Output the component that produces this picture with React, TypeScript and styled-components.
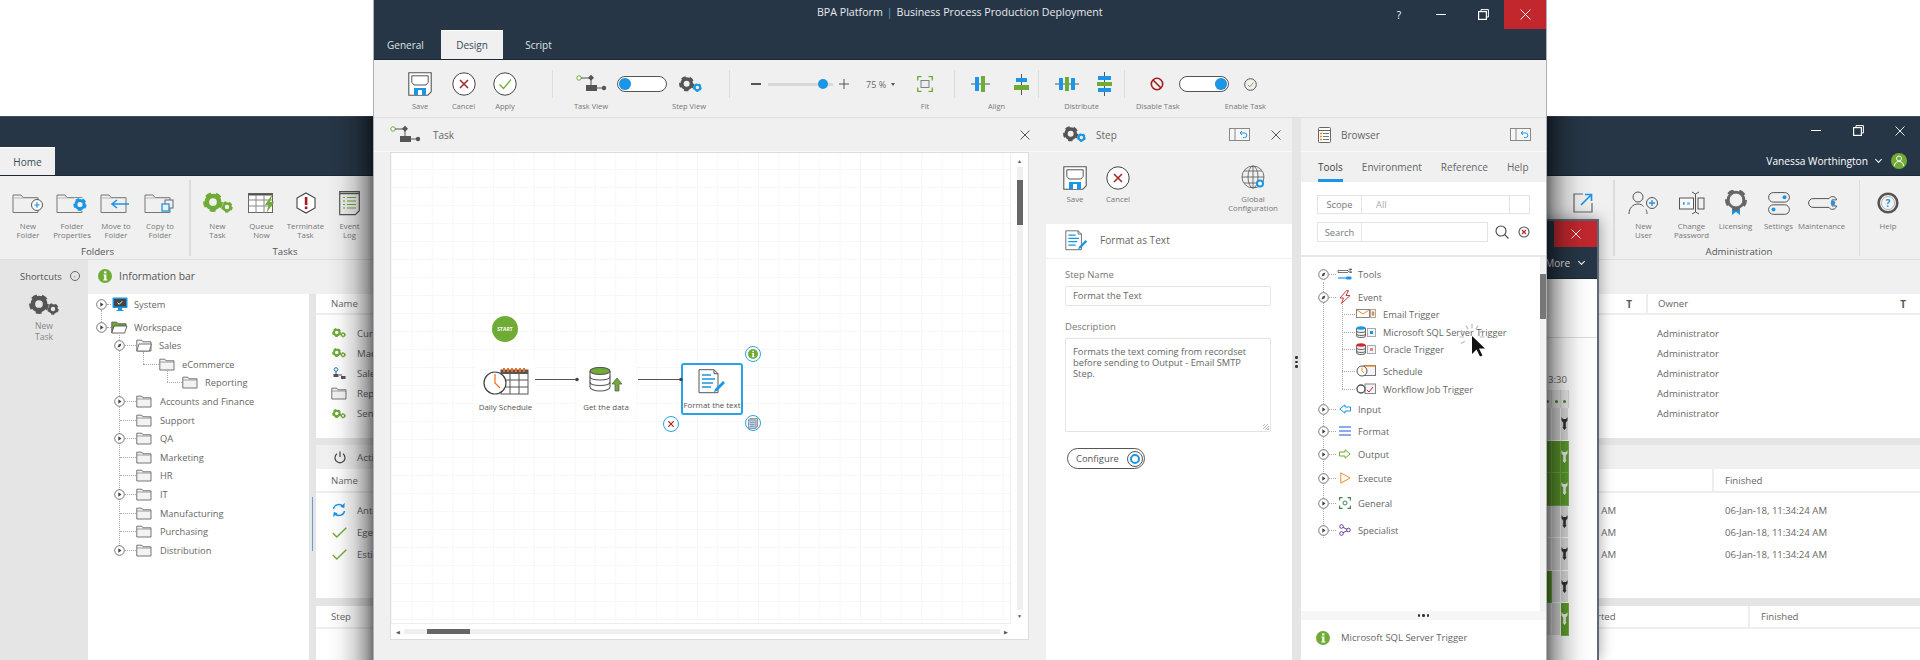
import React from "react";
import styled, { createGlobalStyle } from "styled-components";

const Shell = createGlobalStyle`
  html, body { margin: 0; padding: 0; background: #fff; overflow: hidden; }
  * { box-sizing: border-box; }
  body { font-family: "Open Sans", "Liberation Sans", sans-serif; color: #666; }
`;

const DARK = "#263646";
const BLUE = "#1b95e6";
const GREEN = "#6fab35";
const RED = "#c1272d";

/* ---------- drawings ---------- */

const Gear = ({ x, y, r, c }: { x: number; y: number; r: number; c: string }) => (
  <g fill="none" stroke={c}>
    <circle cx={x} cy={y} r={r * 0.68} strokeWidth={r * 0.5} />
    <circle cx={x} cy={y} r={r * 0.93} strokeWidth={r * 0.34} strokeDasharray={`${r * 0.62} ${r * 0.55}`} />
  </g>
);

const Gears = ({ c = "#555", c2, w = 30, h = 22 }: { c?: string; c2?: string; w?: number; h?: number }) => (
  <svg width={w} height={h} viewBox="0 0 30 22">
    <Gear x={10} y={10} r={9} c={c} />
    <Gear x={24} y={15} r={5.2} c={c2 || c} />
  </svg>
);

const FolderBase = ({ children }: { children?: React.ReactNode }) => (
  <svg width="32" height="21" viewBox="0 0 32 21">
    <path d="M1 19.5V2h8l2 2.5h15v15z" fill="none" stroke="#777" strokeWidth="1" />
    <path d="M1 5h25" stroke="#aaa" strokeWidth=".8" />
    {children}
  </svg>
);

const SmallFolder = ({ open }: { open?: boolean }) => (
  <svg width="16" height="13" viewBox="0 0 16 13">
    <path d="M.8 12V1.2h5l1.2 1.6h8V12z" fill="#f3f3f3" stroke="#666" strokeWidth=".9" />
    {open ? <path d="M.8 12l2.2-7h12.4l-2 7z" fill="#fff" stroke="#666" strokeWidth=".9" /> : <path d="M.8 4h14.2" stroke="#888" strokeWidth=".8" />}
  </svg>
);

const GreenFolder = () => (
  <svg width="17" height="13" viewBox="0 0 17 13">
    <path d="M.8 12V1.2h5l1.2 1.6h8v2" fill={GREEN} stroke="#555" strokeWidth=".9" />
    <path d="M.8 12l2.2-7h13l-2.4 7z" fill="#fff" stroke="#555" strokeWidth=".9" />
  </svg>
);

const Monitor = () => (
  <svg width="16" height="15" viewBox="0 0 16 15">
    <rect x=".5" y=".5" width="15" height="10.5" rx="1" fill={BLUE} />
    <rect x="2" y="2" width="12" height="7.5" fill="#444" />
    <path d="M5.5 5.7l1.7 1.6 3-3" stroke="#fff" strokeWidth="1" fill="none" />
    <path d="M6.5 11h3v2h-3zM4.5 13.5h7" fill={BLUE} stroke={BLUE} />
  </svg>
);

const Save = ({ s = 24 }: { s?: number }) => (
  <svg width={s} height={s} viewBox="0 0 24 24">
    <path d="M.8.8h22.4v19l-3.4 3.4H.8z" fill="#fff" stroke="#555" strokeWidth="1.1" />
    <path d="M3.8 3.8h16.4v6.6l-2.3 2.6H6.1l-2.3-2.6z" fill="none" stroke="#555" />
    <rect x="6" y="16" width="12" height="7" fill={BLUE} />
    <rect x="10" y="18" width="4" height="5" fill="#fff" />
  </svg>
);

const CancelIcon = ({ s = 24 }: { s?: number }) => (
  <svg width={s} height={s} viewBox="0 0 24 24">
    <circle cx="12" cy="12" r="11.2" fill="#fff" stroke="#444" strokeWidth="1" />
    <path d="M8 8l8 8M16 8l-8 8" stroke="#a32222" strokeWidth="1.5" />
  </svg>
);

const ApplyIcon = () => (
  <svg width="24" height="24" viewBox="0 0 24 24">
    <circle cx="12" cy="12" r="11.2" fill="#fff" stroke="#444" strokeWidth="1" />
    <path d="M6.5 12.5l4 4 7.5-9" stroke={GREEN} strokeWidth="1.2" fill="none" />
  </svg>
);

const TaskFlow = () => (
  <svg width="31" height="20" viewBox="0 0 31 20">
    <circle cx="3" cy="4" r="2.2" fill="#fff" stroke={GREEN} />
    <path d="M5 4h10M15 4v9M21 14h6" stroke="#555" strokeWidth="1" fill="none" />
    <path d="M15 .8l3 3-3 3-3-3z" fill="#555" />
    <rect x="10" y="11" width="11" height="6" fill="#555" />
    <circle cx="28" cy="14" r="2.2" fill="#555" />
  </svg>
);

const BlueGears = () => <Gears c="#555" c2={BLUE} w={23} h={17} />;

const FitIcon = () => (
  <svg width="16" height="16" viewBox="0 0 16 16" fill="none">
    <path d="M.7 4.5V.7h3.8M11.5.7h3.8v3.8M15.3 11.5v3.8h-3.8M4.5 15.3H.7v-3.8" stroke={GREEN} strokeWidth="1.3" />
    <rect x="4" y="4.5" width="8" height="7" stroke="#777" fill="#eee" strokeWidth=".9" />
  </svg>
);

const AlignV = () => (
  <svg width="19" height="16" viewBox="0 0 19 16">
    <path d="M0 8h19" stroke="#555" />
    <rect x="4" y="1" width="4" height="14" fill={BLUE} />
    <rect x="10" y="0" width="4" height="16" fill={GREEN} />
  </svg>
);

const AlignH = () => (
  <svg width="15" height="21" viewBox="0 0 15 21">
    <path d="M7.5 0v21" stroke="#555" />
    <rect x="2" y="4" width="11" height="4" fill={BLUE} />
    <rect x="0" y="11" width="15" height="5" fill={GREEN} />
  </svg>
);

const DistV = () => (
  <svg width="24" height="14" viewBox="0 0 24 14">
    <path d="M0 7h24" stroke="#555" />
    <rect x="4" y="1" width="4" height="12" fill={BLUE} />
    <rect x="10" y="0" width="4" height="14" fill={GREEN} />
    <rect x="16" y="1" width="4" height="12" fill={BLUE} />
  </svg>
);

const DistH = () => (
  <svg width="15" height="24" viewBox="0 0 15 24">
    <path d="M7.5 0v24" stroke="#555" />
    <rect x="1" y="4" width="13" height="4" fill={BLUE} />
    <rect x="0" y="10" width="15" height="4" fill={GREEN} />
    <rect x="1" y="16" width="13" height="4" fill={BLUE} />
  </svg>
);

const NoEntry = () => (
  <svg width="14" height="14" viewBox="0 0 14 14" fill="none">
    <circle cx="7" cy="7" r="5.7" stroke="#a01d22" strokeWidth="1.6" />
    <path d="M3 3l8 8" stroke="#a01d22" strokeWidth="1.6" />
  </svg>
);

const SmallCheck = () => (
  <svg width="13" height="13" viewBox="0 0 13 13" fill="none">
    <circle cx="6.5" cy="6.5" r="5.8" stroke="#555" />
    <path d="M3.8 6.8l2 2 3.6-4" stroke={GREEN} />
  </svg>
);

const Undock = () => (
  <svg width="21" height="13" viewBox="0 0 21 13" fill="none">
    <rect x=".5" y=".5" width="20" height="12" stroke="#888" fill="#f6f6f6" />
    <path d="M6 .5v12" stroke="#888" />
    <path d="M11 5h4.5a2.3 2.3 0 0 1 0 4.6H14M13 3l-2 2 2 2" stroke={BLUE} />
  </svg>
);

const CloseX = ({ s = 10, c = "#444", sw = 0.9 }: { s?: number; c?: string; sw?: number }) => (
  <svg width={s} height={s} viewBox="0 0 10 10">
    <path d="M.5.5l9 9M9.5.5l-9 9" stroke={c} strokeWidth={sw} />
  </svg>
);

const RestoreIcon = () => (
  <svg width="11" height="11" viewBox="0 0 11 11" fill="none" stroke="#fff">
    <path d="M3 2.5V.6h7.4V8H8.5" />
    <rect x=".6" y="2.6" width="7.8" height="7.8" strokeWidth="1.2" />
  </svg>
);

const DocPen = ({ w = 28, h = 25 }: { w?: number; h?: number }) => (
  <svg width={w} height={h} viewBox="0 0 28 25" fill="none">
    <path d="M1 .7h15l4 4v19H1z" fill="#fff" stroke="#555" />
    <path d="M16 .7v4h4" stroke="#555" />
    <path d="M4 6h9M4 10h13M4 14h11M4 18h9" stroke={BLUE} strokeWidth="1.5" />
    <path d="M17 20l8-8 2 2-8 8-3 1z" fill={BLUE} />
  </svg>
);

const Globe = () => (
  <svg width="25" height="25" viewBox="0 0 25 25" fill="none" stroke="#555" strokeWidth=".8">
    <circle cx="12" cy="12" r="11" />
    <ellipse cx="12" cy="12" rx="5" ry="11" />
    <path d="M1 12h22M3 6h18M3 18h18M12 1v22" />
    <circle cx="19" cy="18.5" r="3" stroke={BLUE} strokeWidth="2" fill="#fff" />
  </svg>
);

const InfoDot = ({ s = 14 }: { s?: number }) => (
  <svg width={s} height={s} viewBox="0 0 14 14">
    <circle cx="7" cy="7" r="7" fill={GREEN} />
    <rect x="6" y="2.4" width="2.4" height="2" fill="#fff" />
    <path d="M5.4 5.5h3V10.4h1v1H5.2v-1h1V6.5h-.8z" fill="#fff" />
  </svg>
);

const Expander = ({ open }: { open?: boolean }) => (
  <svg width="11" height="11" viewBox="0 0 11 11">
    <circle cx="5.5" cy="5.5" r="4.8" fill="#fff" stroke="#555" strokeWidth=".8" />
    {open ? <path d="M3.6 7.4l1-3 2.8-.9-1 3z" fill="#444" /> : <path d="M4.3 3.3v4.4l3.2-2.2z" fill="#444" />}
  </svg>
);

const NewFolderI = () => (
  <FolderBase>
    <circle cx="25" cy="12" r="5.5" fill="#fff" stroke="#555" />
    <path d="M25 9.3v5.4M22.3 12h5.4" stroke={BLUE} strokeWidth="1.2" />
  </FolderBase>
);
const FolderPropsI = () => (
  <FolderBase>
    <rect x="18" y="5" width="13" height="13" fill="#f0f0f0" />
    <Gear x={24} y={11.5} r={6} c={BLUE} />
  </FolderBase>
);
const MoveFolderI = () => (
  <FolderBase>
    <path d="M13 11h16M17 7l-5 4 5 4" fill="none" stroke={BLUE} strokeWidth="1.6" />
  </FolderBase>
);
const CopyFolderI = () => (
  <FolderBase>
    <rect x="21" y="7" width="8" height="8" fill="#f0f0f0" stroke="#666" />
    <rect x="18" y="11" width="7" height="7" fill="#f0f0f0" stroke={BLUE} strokeWidth="1.3" />
  </FolderBase>
);

const QueueI = () => (
  <svg width="27" height="21" viewBox="0 0 27 21" fill="none">
    <rect x=".5" y=".5" width="24" height="19" fill="#fff" stroke="#666" />
    <path d="M.5 1.5h24" stroke="#555" strokeWidth="2" />
    <path d="M.5 7h24M.5 13h24M8 2v18M16 2v18" stroke="#888" />
    <path d="M23 3l-6 9h3.5l-2 8 7.5-11h-4l2-6z" fill={GREEN} />
  </svg>
);

const TerminateI = () => (
  <svg width="20" height="22" viewBox="0 0 20 22">
    <path d="M10 1l9 5v10l-9 5-9-5V6z" fill="#fff" stroke="#444" strokeWidth="1.1" />
    <rect x="8.8" y="5" width="2.6" height="8" fill="#a61c21" />
    <rect x="8.8" y="14.5" width="2.6" height="2.6" fill="#a61c21" />
  </svg>
);

const LogI = () => (
  <svg width="21" height="25" viewBox="0 0 21 25" fill="none">
    <path d="M.7.7h19.6v19l-4 4H.7z" fill="#f0f0f0" stroke="#555" strokeWidth="1.2" />
    <path d="M.7 2.5h19.6" stroke="#555" strokeWidth="1.5" />
    <path d="M4 6.5h2M8 6.5h9M4 10h2M8 10h9M4 13.5h2M8 13.5h9M4 17h2M8 17h9" stroke={GREEN} />
  </svg>
);

const PopOutI = () => (
  <svg width="20" height="20" viewBox="0 0 20 20" fill="none">
    <path d="M10 1H1v18h18v-9" stroke="#666" strokeWidth="1.2" />
    <path d="M8 12L18 2M12 1.5h6.5V8" stroke={BLUE} strokeWidth="1.7" />
  </svg>
);

const NewUserI = () => (
  <svg width="31" height="24" viewBox="0 0 31 24" fill="none" stroke="#555">
    <circle cx="10" cy="6" r="5" />
    <path d="M1 23c0-6 4-10 9-10 2.5 0 4 .8 5.5 2.5M19 23c0-2-.5-3.5-1-4.5" />
    <circle cx="24" cy="12" r="5.5" />
    <path d="M24 9v6M21 12h6" stroke={BLUE} strokeWidth="1.3" />
  </svg>
);

const ChangePassI = () => (
  <svg width="26" height="24" viewBox="0 0 26 24" fill="none" stroke="#555">
    <rect x=".5" y="7" width="14" height="11" fill="#fafafa" />
    <rect x="19" y="7" width="6" height="11" />
    <path d="M13 1l3.5 2 3.5-2M16.5 3v18M13 23l3.5-2 3.5 2" />
    <path d="M4 12.5h2M8.5 12.5h2" stroke={BLUE} strokeWidth="2.5" strokeDasharray="1 .4" />
  </svg>
);

const LicensingI = () => (
  <svg width="22" height="26" viewBox="0 0 22 26">
    <path d="M7 18v7l4-3 4 3v-7z" fill={BLUE} />
    <Gear x={11} y={10} r={10} c="#666" />
    <circle cx="11" cy="10" r="6.8" fill="#f0f0f0" stroke="#555" strokeWidth=".6" />
  </svg>
);

const SettingsI = () => (
  <svg width="22" height="23" viewBox="0 0 22 23" fill="none" stroke="#555">
    <rect x=".6" y=".6" width="20.8" height="9.5" rx="4.7" />
    <rect x=".6" y="12.8" width="20.8" height="9.5" rx="4.7" />
    <circle cx="16.5" cy="5.3" r="2" fill={BLUE} stroke="none" />
    <circle cx="5.5" cy="17.5" r="2" fill={BLUE} stroke="none" />
  </svg>
);

const MaintI = () => (
  <svg width="30" height="16" viewBox="0 0 30 16" fill="none" stroke="#555">
    <path d="M22 3.6H6a4.4 4.4 0 0 0 0 8.800h16c1 2.6 7 3 7.5-1.500h-4.500v-6h4.500C29 .6 23 1 22 3.6z" />
    <circle cx="26" cy="8" r="2.3" fill={BLUE} stroke="none" />
  </svg>
);

const HelpI = () => (
  <svg width="22" height="22" viewBox="0 0 22 22" fill="none">
    <circle cx="11" cy="11" r="9.3" stroke="#555" strokeWidth="2.6" />
    <circle cx="11" cy="11" r="6.5" fill="#f5f5f5" stroke="#888" strokeWidth=".6" />
    <text x="11" y="14.5" textAnchor="middle" fontSize="10" fontWeight="700" fill={BLUE} fontFamily="Open Sans">?</text>
  </svg>
);

const PowerI = () => (
  <svg width="12" height="13" viewBox="0 0 12 13" fill="none" stroke="#444" strokeWidth="1.2">
    <path d="M6 .6v5.5M3 2.800a5 5 0 1 0 6 0" />
  </svg>
);

const SyncI = () => (
  <svg width="16" height="14" viewBox="0 0 16 14" fill="none" stroke={BLUE} strokeWidth="1.5">
    <path d="M2.5 6a5.5 5.5 0 0 1 10-2M13.5 8a5.5 5.5 0 0 1-10 2" />
    <path d="M13.8 0l-.5 5-4-1.3zM2.2 14l.5-5 4 1.3z" fill={BLUE} stroke="none" />
  </svg>
);

const CheckI = () => (
  <svg width="15" height="11" viewBox="0 0 15 11" fill="none">
    <path d="M.8 6l4 4L14.3 .8" stroke={GREEN} strokeWidth="1.4" />
  </svg>
);

const MiniFlow = () => (
  <svg width="13" height="13" viewBox="0 0 13 13" fill="none" stroke="#1f78b8">
    <circle cx="3" cy="2.5" r="1.8" />
    <path d="M3 4.4v3M6 8h3" stroke="#555" />
    <rect x=".5" y="7" width="5" height="3" fill="#555" stroke="none" />
    <rect x="8" y="9" width="4.5" height="3" fill="#555" stroke="none" />
  </svg>
);

const GreenMini = () => <Gears c={GREEN} w={14} h={10} />;

const ScheduleNode = () => (
  <svg width="46" height="28" viewBox="0 0 46 28" fill="none">
    <rect x="18" y="3" width="27" height="24" fill="#fff" stroke="#555" />
    <rect x="18" y="3" width="27" height="4" fill="#555" />
    <path d="M21 1v4M25 1v4M29 1v4M33 1v4M37 1v4M41 1v4" stroke="#f36c21" strokeWidth="2" />
    <path d="M18 13h27M18 20h27M27 7v20M36 7v20" stroke="#555" />
    <circle cx="12" cy="16" r="11" fill="#fff" stroke="#444" strokeWidth="1.2" />
    <path d="M12 7v9l5 5" stroke="#f36c21" strokeWidth="1.2" />
  </svg>
);

const DataNode = () => (
  <svg width="34" height="25" viewBox="0 0 34 25" fill="none" stroke="#555" strokeWidth="1.1">
    <path d="M1 4v16c0 2 4 4 10 4s10-2 10-4V4" fill="#fff" />
    <ellipse cx="11" cy="4" rx="10" ry="3.5" fill={GREEN} />
    <path d="M1 9.5c0 2 4 3.5 10 3.5s10-1.5 10-3.5M1 15c0 2 4 3.5 10 3.5S21 17 21 15" />
    <path d="M28 11l5 6h-3v7h-4v-7h-3z" fill={GREEN} stroke="#555" strokeWidth=".7" />
  </svg>
);

const CopyBadge = () => (
  <svg width="10" height="11" viewBox="0 0 10 11" fill="none" stroke="#777" strokeWidth=".7">
    <rect x="2" y=".5" width="7.5" height="8.5" fill="#ddd" />
    <rect x=".5" y="2" width="7.5" height="8.5" fill="#ccd" />
    <path d="M2 4.5h4.500M2 6.5h4.500M2 8.500h4.500" stroke="#1b95e6" />
  </svg>
);

const BrowserI = () => (
  <svg width="13" height="16" viewBox="0 0 13 16" fill="none">
    <rect x=".5" y=".5" width="12" height="15" rx="1" stroke="#666" fill="#fff" />
    <path d="M.5 3.5h12" stroke="#666" />
    <path d="M5 6.5h6M5 9.500h6M5 12.500h6" stroke="#777" />
    <path d="M2 6.5h2M2 9.500h2M2 12.500h2" stroke="#f08a2c" strokeWidth="1.3" />
  </svg>
);

const Magnify = () => (
  <svg width="14" height="14" viewBox="0 0 14 14" fill="none" stroke="#444" strokeWidth="1.1">
    <circle cx="6" cy="6" r="5" />
    <path d="M9.700 9.700l3.800 3.800" />
  </svg>
);

const ClearI = () => (
  <svg width="12" height="12" viewBox="0 0 12 12" fill="none">
    <circle cx="6" cy="6" r="5" stroke="#555" fill="#fff" strokeWidth="1.1" />
    <path d="M4 4l4 4M8 4l-4 4" stroke="#b3262b" strokeWidth="1.2" />
  </svg>
);

const ToolsT = () => (
  <svg width="16" height="13" viewBox="0 0 16 13" fill="none" stroke="#555" strokeWidth=".8">
    <path d="M1 2.5h10c.5-1.500 3-2 4-1h-2v2.500h2c-1 1-3.500.5-4-1M1 2.500v2h10" />
    <path d="M1 10h8" stroke={BLUE} strokeWidth="1.2" />
    <rect x="9" y="8.500" width="5.500" height="3" rx="1" fill={BLUE} stroke="none" />
  </svg>
);
const BoltT = () => (
  <svg width="12" height="14" viewBox="0 0 12 14" fill="none" stroke="#c1272d" strokeWidth=".9">
    <path d="M7.500 .6L1 8h3.500l-2 5.500L11 5.500H7l2.500-4.900z" />
  </svg>
);
const EmailT = () => (
  <svg width="20" height="10" viewBox="0 0 20 10" fill="none">
    <rect x=".5" y=".5" width="13" height="8" fill="#fff" stroke="#888" />
    <path d="M1 1l6 4 6-4" stroke="#e88a2e" />
    <rect x="14.500" y=".5" width="5" height="8" fill="#f2f2f2" stroke="#aaa" />
    <rect x="15.800" y="2.500" width="2.400" height="4" fill="#e88a2e" />
  </svg>
);
const DbT = ({ c, badge }: { c: string; badge: string }) => (
  <svg width="20" height="12" viewBox="0 0 20 12" fill="none">
    <path d="M.6 2v8c0 1 2 1.500 4.500 1.500S9.500 11 9.500 10V2" fill="#eee" stroke="#666" />
    <ellipse cx="5" cy="2" rx="4.500" ry="1.700" fill={c} />
    <path d="M.6 5c0 1 2 1.500 4.500 1.500S9.500 6 9.500 5M.6 8c0 1 2 1.500 4.500 1.500S9.500 9 9.500 8" stroke="#666" />
    <rect x="11.500" y="2.500" width="8" height="8" fill="#f4f4f4" stroke="#aaa" />
    <rect x="14" y="5" width="3" height="3" fill={badge} />
  </svg>
);
const ScheduleT = () => (
  <svg width="20" height="12" viewBox="0 0 20 12" fill="none" stroke="#777">
    <rect x="8" y=".5" width="11.500" height="10" fill="#f4f4f4" />
    <path d="M8 1h11.500" stroke="#e88a2e" strokeWidth="1.4" />
    <circle cx="6" cy="6" r="5" fill="#fff" stroke="#555" />
    <path d="M6 2.500V6l2 2" stroke="#e88a2e" />
  </svg>
);
const WorkflowT = () => (
  <svg width="20" height="12" viewBox="0 0 20 12" fill="none" stroke="#555">
    <rect x="9" y="1" width="10.500" height="9.500" fill="#f4f4f4" stroke="#888" />
    <circle cx="5" cy="6" r="4" fill="#fff" strokeWidth="1.4" />
    <path d="M11 7l2 2 4-5" stroke="#c1272d" />
  </svg>
);
const InputT = () => (
  <svg width="12" height="10" viewBox="0 0 12 10" fill="none" stroke={BLUE}>
    <path d="M11.500 3H6V.8L.8 5 6 9.200V7h5.500z" />
  </svg>
);
const FormatT = () => (
  <svg width="12" height="10" viewBox="0 0 12 10">
    <path d="M0 1h12M0 5h12M0 9h12" stroke="#8fa9ee" strokeWidth="2" />
  </svg>
);
const OutputT = () => (
  <svg width="12" height="10" viewBox="0 0 12 10" fill="none" stroke={GREEN}>
    <path d="M.5 3H6V.8L11.200 5 6 9.200V7H.5z" />
  </svg>
);
const ExecuteT = () => (
  <svg width="11" height="12" viewBox="0 0 11 12" fill="none" stroke="#f08a2c">
    <path d="M.8 .8v10.400L10 6z" />
  </svg>
);
const GeneralT = () => (
  <svg width="12" height="12" viewBox="0 0 12 12" fill="none" stroke="#3e7f55">
    <path d="M.6 3.500V.6h2.900M8.500.6h2.900v2.900M11.400 8.500v2.900H8.500M3.500 11.400H.6V8.500" strokeWidth="1.1" />
    <circle cx="6" cy="6" r="2" />
  </svg>
);
const SpecialistT = () => (
  <svg width="12" height="12" viewBox="0 0 12 12" fill="none" stroke="#6b3fa0">
    <circle cx="2.500" cy="2.500" r="1.800" />
    <circle cx="9.500" cy="6" r="1.800" />
    <circle cx="2.500" cy="9.500" r="1.800" />
    <path d="M4 3.300l4 2M8 6.800l-4 2" />
  </svg>
);

const Cursor = () => (
  <svg width="30" height="34" viewBox="0 0 30 34">
    <path
      d="M13 0v4.500M7 1.500l2.200 3.800M19 1.500l-2.200 3.800M2 6.500l3.800 2.200M24 6.500l-3.800 2.200M.5 13H5M25.500 13H21M2 19.500l3.800-2.200"
      stroke="#bbb"
      strokeWidth="1.200"
      fill="none"
    />
    <path d="M13 12v18l4.500-4.500 3.500 7 2.500-1-3.500-7h6z" fill="#111" />
  </svg>
);

/* ---------- page frame ---------- */

const Desktop = styled.div`
  position: relative;
  width: 1920px;
  height: 660px;
  overflow: hidden;
  background: #fff;
`;

const BackWindow = styled.div`
  position: absolute;
  left: 0;
  right: 0;
  top: 116px;
  bottom: 0;
  display: flex;
  flex-direction: column;
  background: #f0f0f0;
  z-index: 1;
`;

const MainWindow = styled.div`
  position: absolute;
  left: 373px;
  top: 0;
  width: 1174px;
  height: 660px;
  display: flex;
  flex-direction: column;
  background: #f0f0f0;
  border-left: 1px solid #aab1b8;
  border-right: 1px solid #aab1b8;
  z-index: 4;
`;

const Shade = styled.div<{ $side: "left" | "right" }>`
  position: absolute;
  top: 116px;
  bottom: 0;
  z-index: 3;
  width: 46px;
  ${(p) => (p.$side === "left" ? "left: 327px;" : "left: 1547px;")}
  background: linear-gradient(
    ${(p) => (p.$side === "left" ? "to right" : "to left")},
    rgba(0, 0, 0, 0) 0%,
    rgba(0, 0, 0, 0.04) 30%,
    rgba(0, 0, 0, 0.16) 60%,
    rgba(0, 0, 0, 0.36) 85%,
    rgba(0, 0, 0, 0.55) 100%
  );
`;

/* ---------- back window ---------- */

const BackTitle = styled.div`
  height: 60px;
  flex: none;
  display: flex;
  flex-direction: column;
  background: ${DARK};
  border-top: 1px solid #3f4d5b;
  border-bottom: 1px solid #1c2935;
`;

const WinControls = styled.div`
  height: 27px;
  display: flex;
  justify-content: flex-end;
`;

const WinButton = styled.div<{ $w?: number; $red?: boolean }>`
  width: ${(p) => p.$w || 42}px;
  display: flex;
  align-items: center;
  justify-content: center;
  color: #fff;
  background: ${(p) => (p.$red ? RED : "transparent")};
  font-size: 10px;
`;

const MinBar = styled.span<{ $dark?: boolean }>`
  width: 10px;
  height: 1.5px;
  background: ${(p) => (p.$dark ? "#555" : "#fff")};
`;

const BackTabs = styled.div`
  flex: 1;
  display: flex;
  align-items: flex-end;
  justify-content: space-between;
`;

const HomeTab = styled.div`
  width: 55px;
  height: 28px;
  display: flex;
  align-items: center;
  justify-content: center;
  background: #f0f0f0;
  border-top: 1px solid #fff;
  font-size: 10px;
  color: #3a4a58;
`;

const UserBox = styled.div`
  height: 28px;
  display: flex;
  align-items: center;
  padding-right: 13px;
  color: #fff;
  font-size: 10.2px;
`;

const Chevron = styled.span`
  width: 5px;
  height: 5px;
  margin: -3px 10px 0 8px;
  border-right: 1px solid #fff;
  border-bottom: 1px solid #fff;
  transform: rotate(45deg);
`;

const Avatar = styled.div`
  width: 16px;
  height: 16px;
  border-radius: 50%;
  background: ${GREEN};
  display: flex;
  align-items: center;
  justify-content: center;
`;

const Ribbon = styled.div`
  height: 84px;
  flex: none;
  display: flex;
  background: #f0f0f0;
  border-bottom: 1px solid #ddd;
`;

const RibbonGroup = styled.div<{ $w: number; $pad?: number; $auto?: boolean }>`
  position: relative;
  width: ${(p) => p.$w}px;
  flex: none;
  padding: 10px 0 0 ${(p) => p.$pad || 0}px;
  ${(p) => p.$auto && "margin-left: auto;"}
`;

const RibbonDivider = styled.div`
  width: 1.5px;
  height: 76px;
  margin-top: 4px;
  flex: none;
  background: #dcdcdc;
`;

const RibbonItems = styled.div`
  height: 59px;
  display: flex;
`;

const RibbonItem = styled.div<{ $w: number }>`
  width: ${(p) => p.$w}px;
  flex: none;
  display: flex;
  flex-direction: column;
  align-items: center;
`;

const RibbonIcon = styled.div`
  height: 34px;
  flex: none;
  display: flex;
  align-items: center;
  justify-content: center;
`;

const RibbonLabel = styled.div`
  margin-top: 2px;
  font-size: 7.8px;
  line-height: 9px;
  text-align: center;
  white-space: nowrap;
  color: #777;
`;

const GroupTitle = styled.div`
  height: 14px;
  font-size: 9.7px;
  line-height: 14px;
  font-weight: 500;
  text-align: center;
  color: #555;
`;

const BackBody = styled.div`
  flex: 1;
  min-height: 0;
  display: grid;
  grid-template-columns: 88px 1fr;
`;

const Sidebar = styled.aside`
  display: flex;
  flex-direction: column;
  align-items: center;
  background: #e5e5e5;
`;

const SidebarHead = styled.div`
  width: 100%;
  height: 34px;
  display: flex;
  align-items: center;
  padding: 0 0 2px 20px;
  gap: 8px;
  font-size: 9.4px;
  color: #555;
`;

const BackCircle = styled.span`
  width: 10px;
  height: 10px;
  border: 1px solid #666;
  border-radius: 50%;
  font-size: 6px;
  line-height: 8px;
  text-align: center;
`;

const ShortcutLabel = styled.div`
  margin-top: 5px;
  font-size: 8.6px;
  line-height: 11px;
  text-align: center;
  color: #888;
`;

const BackMain = styled.div`
  min-width: 0;
  display: flex;
  flex-direction: column;
`;

const InfoBar = styled.div`
  height: 34px;
  flex: none;
  display: flex;
  align-items: center;
  gap: 7px;
  padding: 0 0 2px 10px;
  font-size: 10.3px;
  font-weight: 500;
  color: #555;
`;

const Split = styled.div`
  flex: 1;
  min-height: 0;
  display: grid;
  grid-template-columns: 221px 1fr;
  column-gap: 7px;
  background: #e5e5e5;
`;

const TreePane = styled.div`
  position: relative;
  background: #fff;
`;

const TreeScroll = styled.div`
  position: absolute;
  left: 224px;
  top: 203px;
  width: 1px;
  height: 54px;
  background: #6d9cc4;
`;

const TreeList = styled.div<{ $top?: number }>`
  padding-top: ${(p) => p.$top || 0}px;
`;

const TreeRow = styled.div<{ $dy: number; $pad: number }>`
  position: relative;
  height: 18px;
  margin-top: ${(p) => p.$dy - 18}px;
  padding-left: ${(p) => p.$pad}px;
  display: flex;
  align-items: center;
  font-size: 9.3px;
  color: #666;
  white-space: nowrap;
`;

const Dash = styled.span<{ $w: number }>`
  width: ${(p) => p.$w}px;
  flex: none;
  height: 0;
  border-top: 1px dotted #aaa;
`;

const TreeIcon = styled.span<{ $w: number; $gap: number }>`
  width: ${(p) => p.$w}px;
  margin-right: ${(p) => p.$gap}px;
  flex: none;
  display: flex;
  align-items: center;
  justify-content: center;
`;

const Guide = styled.div<{ $x: number; $y: number; $h: number }>`
  position: absolute;
  left: ${(p) => p.$x}px;
  top: ${(p) => p.$y}px;
  height: ${(p) => p.$h}px;
  width: 0;
  border-left: 1px dotted #aaa;
`;

const Tables = styled.div`
  min-width: 0;
  display: flex;
  flex-direction: column;
`;

const TablePanel = styled.section<{ $h?: number; $gap?: number }>`
  ${(p) => (p.$h ? `height: ${p.$h}px;` : "flex: 1;")}
  margin-top: ${(p) => p.$gap || 0}px;
  background: #fff;
`;

const ActionsBar = styled.div`
  height: 24px;
  display: flex;
  align-items: center;
  gap: 11px;
  padding-left: 18px;
  background: #f0f0f0;
  font-size: 9.8px;
`;

const TableHead = styled.div<{ $cols: string; $h: number }>`
  height: ${(p) => p.$h}px;
  display: grid;
  grid-template-columns: ${(p) => p.$cols};
  background: #fff;
  border-bottom: 2px solid #eee;
  font-size: 9.6px;
  color: #666;
`;

const HeadCell = styled.div<{ $pad: number; $sep?: boolean }>`
  position: relative;
  display: flex;
  align-items: center;
  padding-left: ${(p) => p.$pad}px;
  ${(p) => p.$sep && "border-left: 2px solid #eee;"}
`;

const FilterMark = styled.span`
  position: absolute;
  right: 14px;
  top: 3px;
  font-size: 10px;
  font-weight: 700;
  color: #555;
`;

const TableRows = styled.div<{ $pad: number }>`
  padding-top: ${(p) => p.$pad}px;
`;

const TableRow = styled.div<{ $cols: string; $h: number }>`
  height: ${(p) => p.$h}px;
  display: grid;
  grid-template-columns: ${(p) => p.$cols};
  align-items: center;
  font-size: 9.6px;
  color: #666;
`;

const CellName = styled.div`
  display: flex;
  align-items: center;
  padding-left: 14px;
`;

const CellIcon = styled.span`
  width: 18px;
  margin-right: 9px;
  display: flex;
  justify-content: center;
`;

const CellText = styled.div<{ $pad?: number }>`
  padding-left: ${(p) => p.$pad || 0}px;
  white-space: nowrap;
`;

/* ---------- small window behind the main one ---------- */

const MidWindow = styled.div`
  position: absolute;
  left: 1440px;
  top: 219px;
  width: 159px;
  height: 441px;
  display: flex;
  flex-direction: column;
  background: #fff;
  border-top: 2px solid #56626e;
  border-right: 2px solid #5c6a77;
  box-shadow: 0 0 14px rgba(0, 0, 0, 0.38);
  z-index: 2;
`;

const MidTitle = styled.div`
  height: 26px;
  flex: none;
  display: flex;
  justify-content: flex-end;
  background: ${DARK};
`;

const MidMenu = styled.div`
  height: 32px;
  flex: none;
  display: flex;
  align-items: center;
  justify-content: flex-end;
  padding-right: 13px;
  background: ${DARK};
  border-bottom: 1px solid #1c2935;
  color: #e8e8e8;
  font-size: 10px;
  white-space: nowrap;
`;

const MidChevron = styled.span`
  width: 5px;
  height: 5px;
  margin: -3px 0 0 9px;
  border-right: 1px solid #fff;
  border-bottom: 1px solid #fff;
  transform: rotate(45deg);
`;

const MidPlain = styled.div`
  height: 59px;
  flex: none;
  border-bottom: 1px solid #ddd;
`;

const MidTime = styled.div`
  height: 52px;
  flex: none;
  display: flex;
  align-items: flex-end;
  justify-content: flex-end;
  padding: 0 30px 4px 0;
  font-size: 9.6px;
  color: #666;
`;

const Gantt = styled.div`
  display: grid;
  grid-template-columns: repeat(12, 8.3px);
  margin-left: auto;
  margin-right: 28px;
`;

const DotCell = styled.div`
  height: 18px;
  display: flex;
  align-items: flex-end;
  justify-content: center;
  padding-bottom: 5px;
  background: #eee;
  border-right: 1px solid #ddd;
  &::after {
    content: "";
    width: 3px;
    height: 3px;
    border-radius: 50%;
    background: #4f8a20;
  }
`;

const GanttCell = styled.div<{ $green: boolean }>`
  height: 32.5px;
  display: flex;
  align-items: center;
  justify-content: center;
  background: ${(p) => (p.$green ? "#5f9f2c" : "#dfdfdf")};
  border-right: 1px solid ${(p) => (p.$green ? "#7bb34f" : "#fff")};
  border-bottom: 1px solid ${(p) => (p.$green ? "#7bb34f" : "#fff")};
  color: ${(p) => (p.$green ? "#eee" : "#333")};
`;

const Wrench = ({ c }: { c: string }) => (
  <svg width="7" height="13" viewBox="0 0 7 13">
    <path d="M.5 0v3.500L2.200 5.500v4.500L1.500 10.500 3.500 13 5.500 10.500 4.800 10V5.500L6.500 3.500V0L5 2H2z" fill={c} />
  </svg>
);

/* ---------- main window ---------- */

const MainTitle = styled.div`
  height: 60px;
  flex: none;
  display: flex;
  flex-direction: column;
  background: ${DARK};
  border-bottom: 1px solid #1c2935;
`;

const MainTop = styled.div`
  position: relative;
  height: 29px;
  display: flex;
  justify-content: flex-end;
`;

const AppTitle = styled.div`
  position: absolute;
  left: 443px;
  top: 5px;
  color: #e6eaed;
  font-size: 10.65px;
  white-space: nowrap;
`;

const TitleSep = styled.span`
  color: #3aa0e0;
  margin: 0 4px;
`;

const MainTabs = styled.div`
  flex: 1;
  display: flex;
  align-items: flex-end;
`;

const MainTab = styled.div<{ $w: number; $after?: number; $active?: boolean }>`
  width: ${(p) => p.$w}px;
  margin-right: ${(p) => p.$after || 0}px;
  height: 29px;
  display: flex;
  align-items: center;
  justify-content: center;
  font-size: 10px;
  color: ${(p) => (p.$active ? "#3a4a58" : "#dfe3e6")};
  background: ${(p) => (p.$active ? "#f0f0f0" : "transparent")};
  ${(p) => p.$active && "border-top: 1px solid #fff;"}
`;

const Toolbar = styled.div`
  height: 58px;
  flex: none;
  display: flex;
  padding: 10px 0 0 24px;
  background: #f0f0f0;
  border-bottom: 1.5px solid #dedede;
`;

const Tool = styled.div<{ $w: number; $left?: number }>`
  width: ${(p) => p.$w}px;
  margin-left: ${(p) => p.$left || 0}px;
  flex: none;
  display: flex;
  flex-direction: column;
  align-items: center;
`;

const ToolIcon = styled.div`
  height: 28px;
  width: 100%;
  display: flex;
  align-items: center;
  justify-content: center;
`;

const ToolIconPair = styled(ToolIcon)<{ $gap: number; $shift?: number }>`
  gap: ${(p) => p.$gap}px;
  padding-left: ${(p) => p.$shift || 0}px;
`;

const ToolLabel = styled.div`
  margin-top: 2px;
  font-size: 7.5px;
  line-height: 12px;
  white-space: nowrap;
  color: #777;
`;

const ToolSep = styled.div<{ $left: number }>`
  width: 1px;
  height: 28px;
  margin-left: ${(p) => p.$left}px;
  flex: none;
  background: #dcdcdc;
`;

const SwitchIcons = styled.div`
  height: 28px;
  display: flex;
  align-items: center;
  padding-left: 17px;
  gap: 15px;
`;

const SwitchLabels = styled.div`
  display: flex;
  padding-left: 12px;
  gap: 45px;
`;

const Toggle = styled.div<{ $on?: boolean; $w: number }>`
  width: ${(p) => p.$w}px;
  height: 16px;
  flex: none;
  padding: 0 1.5px;
  display: flex;
  align-items: center;
  justify-content: ${(p) => (p.$on ? "flex-end" : "flex-start")};
  border: 1px solid #555;
  border-radius: 8px;
  background: #fff;
  &::after {
    content: "";
    width: 11.5px;
    height: 11.5px;
    border-radius: 50%;
    background: ${BLUE};
  }
`;

const ZoomBox = styled.div`
  height: 28px;
  margin-left: 21px;
  flex: none;
  display: flex;
  align-items: center;
  font-size: 9px;
  color: #666;
`;

const ZoomTrack = styled.div`
  position: relative;
  width: 65px;
  height: 3px;
  margin: 0 6px 0 7px;
  background: #d9d9d9;
`;

const ZoomKnob = styled.span`
  position: absolute;
  left: 50px;
  top: -3.5px;
  width: 10px;
  height: 10px;
  border-radius: 50%;
  background: ${BLUE};
`;

const ZoomValue = styled.span`
  margin-left: 17px;
`;

const Caret = styled.span`
  width: 0;
  height: 0;
  margin-left: 5px;
  border-left: 2.5px solid transparent;
  border-right: 2.5px solid transparent;
  border-top: 3px solid #555;
`;

const Panels = styled.div`
  flex: 1;
  min-height: 0;
  display: grid;
  grid-template-columns: 672px 246px 9px 1fr;
`;

const Panel = styled.div`
  min-width: 0;
  display: flex;
  flex-direction: column;
  background: #f0f0f0;
`;

const PanelHead = styled.div<{ $pad: number; $right: number; $gap?: number }>`
  height: 34px;
  flex: none;
  display: flex;
  align-items: center;
  gap: ${(p) => p.$gap || 10}px;
  padding: 0 ${(p) => p.$right}px 0 ${(p) => p.$pad}px;
  border-bottom: 1.5px solid #f8f8f8;
  font-size: 10px;
  color: #666;
`;

const HeadSpacer = styled.span`
  flex: 1;
`;

const HeadClose = styled.span`
  margin-left: 11px;
  display: flex;
`;

const CanvasBox = styled.div`
  position: relative;
  width: 639px;
  height: 488px;
  margin: 0 0 0 16px;
  flex: none;
  background: #fff;
  border: 1px solid #dcdcdc;
  display: grid;
  grid-template-columns: 1fr 17px;
  grid-template-rows: 1fr 15px;
`;

const Canvas = styled.div`
  position: relative;
  overflow: hidden;
  background-color: #fff;
  background-image: linear-gradient(to right, #f7f7f7 1px, transparent 1px),
    linear-gradient(to bottom, #f7f7f7 1px, transparent 1px);
  background-size: 20.4px 18px;
  background-position: 0 16px;
  border-right: 1px solid #eee;
  border-bottom: 1px solid #eee;
`;

const StartDot = styled.div`
  position: absolute;
  left: 101px;
  top: 163px;
  width: 26px;
  height: 26px;
  display: flex;
  align-items: center;
  justify-content: center;
  border-radius: 50%;
  background: ${GREEN};
  color: #fff;
  font-size: 5px;
  font-weight: 700;
`;

const Node = styled.div<{ $x: number; $w: number }>`
  position: absolute;
  left: ${(p) => p.$x}px;
  top: 210px;
  width: ${(p) => p.$w}px;
  height: 52px;
  display: flex;
  flex-direction: column;
  align-items: center;
  justify-content: space-between;
  padding: 4px 0 3px;
  background: #fff;
  font-size: 7.9px;
  font-weight: 500;
  color: #555;
  white-space: nowrap;
`;

const SelectedNode = styled(Node)`
  border: 2px solid #2aa3e6;
  border-radius: 3px;
`;

const Links = styled.svg`
  position: absolute;
  left: 0;
  top: 0;
`;

const Badge = styled.div<{ $x: number; $y: number }>`
  position: absolute;
  left: ${(p) => p.$x}px;
  top: ${(p) => p.$y}px;
  width: 16px;
  height: 16px;
  display: flex;
  align-items: center;
  justify-content: center;
  border: 1.2px solid #2aa3e6;
  border-radius: 50%;
  background: #fff;
`;

const VScroll = styled.div`
  display: flex;
  flex-direction: column;
  align-items: center;
  padding-top: 5px;
  font-size: 5px;
  color: #555;
`;

const VTrack = styled.div`
  width: 6px;
  height: 443px;
  margin: 3px 0;
  padding-top: 13px;
  background: #efefef;
`;

const VThumb = styled.div`
  height: 45px;
  background: #666;
`;

const HScroll = styled.div`
  display: flex;
  align-items: center;
  padding-left: 5px;
  font-size: 5px;
  color: #555;
  gap: 4px;
`;

const HTrack = styled.div`
  width: 596px;
  height: 5px;
  padding-left: 23px;
  background: #efefef;
`;

const HThumb = styled.div`
  width: 43px;
  height: 5px;
  background: #666;
`;

const StepBar = styled.div`
  height: 72px;
  flex: none;
  display: flex;
  padding: 13px 0 0 17px;
  background: #f0f0f0;
`;

const StepTool = styled.div<{ $w: number; $auto?: boolean }>`
  width: ${(p) => p.$w}px;
  ${(p) => p.$auto && "margin-left: auto; margin-right: 14px;"}
  display: flex;
  flex-direction: column;
  align-items: center;
  font-size: 7.8px;
  line-height: 8.5px;
  color: #777;
  text-align: center;
  white-space: nowrap;
`;

const StepToolIcon = styled.div`
  height: 25px;
  margin-bottom: 5px;
  display: flex;
  align-items: center;
`;

const StepForm = styled.div`
  flex: 1;
  display: flex;
  flex-direction: column;
  background: #fff;
`;

const FormHead = styled.div`
  height: 35px;
  flex: none;
  display: flex;
  align-items: center;
  gap: 12px;
  padding: 0 0 2px 19px;
  border-bottom: 1.5px solid #f2f2f2;
  font-size: 10.1px;
  color: #666;
`;

const FormBody = styled.div`
  padding: 9px 21px 0 19px;
`;

const FieldLabel = styled.div<{ $top?: number }>`
  margin-top: ${(p) => p.$top || 0}px;
  margin-bottom: 5px;
  font-size: 9.5px;
  line-height: 13px;
  color: #777;
`;

const FieldBox = styled.div<{ $h: number }>`
  position: relative;
  height: ${(p) => p.$h}px;
  padding: 0 7px;
  border: 1px solid #e3e3e3;
  border-radius: 1px;
  font-size: 9.3px;
  color: #666;
`;

const TextLines = styled.div<{ $top: number }>`
  padding-top: ${(p) => p.$top}px;
  line-height: 11px;
`;

const ResizeGrip = styled.span`
  position: absolute;
  right: 1px;
  bottom: 1px;
  width: 6px;
  height: 6px;
  background: repeating-linear-gradient(135deg, transparent 0 1px, #bbb 1px 2px);
`;

const ConfigureBtn = styled.div`
  width: 78px;
  height: 21px;
  margin: 16px 0 0 2px;
  display: flex;
  align-items: center;
  justify-content: space-between;
  padding: 0 1px 0 8px;
  border: 1px solid #555;
  border-radius: 11px;
  font-size: 9.4px;
  font-weight: 500;
  color: #555;
`;

const ConfigureDot = styled.span`
  width: 16px;
  height: 16px;
  border: 1px solid #555;
  border-radius: 50%;
  display: flex;
  align-items: center;
  justify-content: center;
  &::after {
    content: "";
    width: 6px;
    height: 6px;
    border: 2px solid ${BLUE};
    border-radius: 50%;
  }
`;

const Splitter = styled.div`
  display: flex;
  flex-direction: column;
  align-items: center;
  justify-content: center;
  gap: 2px;
  padding-bottom: 54px;
  background: #e5e5e5;
`;

const SplitDot = styled.span`
  width: 2.5px;
  height: 2.5px;
  border-radius: 50%;
  background: #333;
`;

const BrowserTabs = styled.div`
  height: 30px;
  flex: none;
  display: flex;
  gap: 19px;
  padding-left: 17px;
  font-size: 10px;
  font-weight: 500;
  color: #666;
`;

const BrowserTab = styled.div<{ $active?: boolean }>`
  display: flex;
  align-items: center;
  color: ${(p) => (p.$active ? "#444" : "#666")};
  border-bottom: 3px solid ${(p) => (p.$active ? BLUE : "transparent")};
  padding-top: 2px;
`;

const SearchArea = styled.div`
  height: 75px;
  flex: none;
  padding: 13px 16px 0;
  background: #fff;
  border-bottom: 2px solid #e8e8e8;
`;

const SearchRow = styled.div<{ $top?: number }>`
  display: flex;
  align-items: center;
  margin-top: ${(p) => p.$top || 0}px;
`;

const Field = styled.div<{ $w: number; $h: number }>`
  width: ${(p) => p.$w}px;
  height: ${(p) => p.$h}px;
  flex: none;
  display: flex;
  border: 1px solid #e3e3e3;
  font-size: 9.3px;
  color: #777;
`;

const FieldName = styled.div`
  width: 44px;
  display: flex;
  align-items: center;
  justify-content: center;
  border-right: 1px solid #e3e3e3;
`;

const FieldValue = styled.div`
  flex: 1;
  display: flex;
  align-items: center;
  padding-left: 14px;
  color: #aaa;
`;

const FieldEnd = styled.div`
  width: 20px;
  border-left: 1px solid #e3e3e3;
`;

const SearchIcons = styled.div`
  margin-left: 7px;
  display: flex;
  align-items: center;
  gap: 9px;
`;

const BrowserTreeWrap = styled.div`
  position: relative;
  flex: 1;
  min-height: 0;
  background: #fff;
`;

const TreeScrollbar = styled.div`
  position: absolute;
  right: 0;
  top: 0;
  bottom: 0;
  width: 6px;
  padding-top: 17px;
  background: #f2f2f2;
`;

const TreeThumb = styled.div`
  height: 45px;
  background: #777;
`;

const PointerSpot = styled.div`
  position: absolute;
  left: 158px;
  top: 67px;
`;

const DragBand = styled.div`
  height: 9px;
  flex: none;
  display: flex;
  align-items: center;
  justify-content: center;
  gap: 2px;
  background: #f6f6f6;
`;

const StatusBar = styled.div`
  height: 40px;
  flex: none;
  display: flex;
  align-items: center;
  gap: 11px;
  padding-left: 15px;
  padding-bottom: 5px;
  background: #fff;
  font-size: 9.5px;
  color: #666;
`;

/* ---------- data ---------- */

const folderRibbon = [
  { icon: <NewFolderI />, label: ["New", "Folder"] },
  { icon: <FolderPropsI />, label: ["Folder", "Properties"] },
  { icon: <MoveFolderI />, label: ["Move to", "Folder"] },
  { icon: <CopyFolderI />, label: ["Copy to", "Folder"] },
];
const taskRibbon = [
  { icon: <Gears c={GREEN} />, label: ["New", "Task"] },
  { icon: <QueueI />, label: ["Queue", "Now"] },
  { icon: <TerminateI />, label: ["Terminate", "Task"] },
  { icon: <LogI />, label: ["Event", "Log"] },
];
const adminRibbon = [
  { w: 48, icon: <NewUserI />, label: ["New", "User"] },
  { w: 48, icon: <ChangePassI />, label: ["Change", "Password"] },
  { w: 40, icon: <LicensingI />, label: ["Licensing"] },
  { w: 46, icon: <SettingsI />, label: ["Settings"] },
  { w: 40, icon: <MaintI />, label: ["Maintenance"] },
];

const backTree = [
  { label: "System", dy: 19, pad: 8, dash: 4, exp: true, icon: <Monitor />, w: 17, gap: 6 },
  { label: "Workspace", dy: 23, pad: 8, dash: 4, exp: true, icon: <GreenFolder />, w: 17, gap: 6 },
  { label: "Sales", dy: 18, pad: 26, dash: 11, exp: true, open: true, icon: <SmallFolder open />, w: 16, gap: 7 },
  { label: "eCommerce", dy: 19, pad: 55, dash: 16, icon: <SmallFolder />, w: 16, gap: 7 },
  { label: "Reporting", dy: 18, pad: 79, dash: 15, icon: <SmallFolder />, w: 16, gap: 7 },
  { label: "Accounts and Finance", dy: 19, pad: 26, dash: 11, exp: true, icon: <SmallFolder />, w: 16, gap: 8 },
  { label: "Support", dy: 19, pad: 32, dash: 16, icon: <SmallFolder />, w: 16, gap: 8 },
  { label: "QA", dy: 18, pad: 26, dash: 11, exp: true, icon: <SmallFolder />, w: 16, gap: 8 },
  { label: "Marketing", dy: 19, pad: 32, dash: 16, icon: <SmallFolder />, w: 16, gap: 8 },
  { label: "HR", dy: 18, pad: 32, dash: 16, icon: <SmallFolder />, w: 16, gap: 8 },
  { label: "IT", dy: 19, pad: 26, dash: 11, exp: true, icon: <SmallFolder />, w: 16, gap: 8 },
  { label: "Manufacturing", dy: 19, pad: 32, dash: 16, icon: <SmallFolder />, w: 16, gap: 8 },
  { label: "Purchasing", dy: 18, pad: 32, dash: 16, icon: <SmallFolder />, w: 16, gap: 8 },
  { label: "Distribution", dy: 19, pad: 26, dash: 11, exp: true, icon: <SmallFolder />, w: 16, gap: 8 },
];

const toolTree = [
  { label: "Tools", dy: 26, pad: 17, dash: 7, exp: true, open: true, icon: <ToolsT />, w: 18, gap: 4 },
  { label: "Event", dy: 23, pad: 17, dash: 7, exp: true, open: true, icon: <BoltT />, w: 18, gap: 4 },
  { label: "Email Trigger", dy: 17, pad: 41, dash: 13, icon: <EmailT />, w: 21, gap: 7 },
  { label: "Microsoft SQL Server Trigger", dy: 18, pad: 41, dash: 13, icon: <DbT c={BLUE} badge={BLUE} />, w: 21, gap: 7 },
  { label: "Oracle Trigger", dy: 17, pad: 41, dash: 13, icon: <DbT c="#d9242a" badge="#e88a7e" />, w: 21, gap: 7 },
  { label: "Schedule", dy: 22, pad: 41, dash: 13, icon: <ScheduleT />, w: 21, gap: 7 },
  { label: "Workflow Job Trigger", dy: 18, pad: 41, dash: 13, icon: <WorkflowT />, w: 21, gap: 7 },
  { label: "Input", dy: 20, pad: 17, dash: 7, exp: true, icon: <InputT />, w: 18, gap: 4 },
  { label: "Format", dy: 22, pad: 17, dash: 7, exp: true, icon: <FormatT />, w: 18, gap: 4 },
  { label: "Output", dy: 23, pad: 17, dash: 7, exp: true, icon: <OutputT />, w: 18, gap: 4 },
  { label: "Execute", dy: 24, pad: 17, dash: 7, exp: true, icon: <ExecuteT />, w: 18, gap: 4 },
  { label: "General", dy: 25, pad: 17, dash: 7, exp: true, icon: <GeneralT />, w: 18, gap: 4 },
  { label: "Specialist", dy: 27, pad: 17, dash: 7, exp: true, icon: <SpecialistT />, w: 18, gap: 4 },
];

type TreeItem = (typeof backTree)[number] & { exp?: boolean; open?: boolean };

const tableCols = "1330px 1fr";
const actionCols = "1198px 198px 1fr";
const stepCols = "1267px 165px 1fr";

const taskRows = [
  { icon: <GreenMini />, name: "Curation" },
  { icon: <GreenMini />, name: "Maestro" },
  { icon: <MiniFlow />, name: "Sales" },
  { icon: <SmallFolder />, name: "Reports" },
  { icon: <GreenMini />, name: "Send" },
];

const actionRows = [
  { icon: <SyncI />, name: "Antenna" },
  { icon: <CheckI />, name: "Egestas" },
  { icon: <CheckI />, name: "Estimate" },
];

// one row per line of the chart, true where the cell is green
const ganttRows = [
  [false, false, false],
  [true, true, true],
  [true, true, true],
  [false, false, false],
  [false, false, false],
  [true, false, false],
  [false, false, true],
];

function renderTree(items: TreeItem[]) {
  return items.map((t) => (
    <TreeRow key={t.label} $dy={t.dy} $pad={t.pad}>
      {t.exp && <Expander open={t.open} />}
      <Dash $w={t.dash} />
      <TreeIcon $w={t.w} $gap={t.gap}>
        {t.icon}
      </TreeIcon>
      {t.label}
    </TreeRow>
  ));
}

function App() {
  return (
    <Desktop>
      <Shell />

      <BackWindow>
        <BackTitle>
          <WinControls>
            <WinButton>
              <MinBar />
            </WinButton>
            <WinButton>
              <RestoreIcon />
            </WinButton>
            <WinButton $w={41}>
              <CloseX s={10} c="#fff" />
            </WinButton>
          </WinControls>
          <BackTabs>
            <HomeTab>Home</HomeTab>
            <UserBox>
              Vanessa Worthington
              <Chevron />
              <Avatar>
                <svg width="10" height="12" viewBox="0 0 10 12" fill="none" stroke="#fff">
                  <circle cx="5" cy="3.5" r="2.5" />
                  <path d="M.5 11c0-3 2-4.500 4.500-4.500S9.500 8 9.500 11" />
                </svg>
              </Avatar>
            </UserBox>
          </BackTabs>
        </BackTitle>

        <Ribbon>
          <RibbonGroup $w={189} $pad={6}>
            <RibbonItems>
              {folderRibbon.map((r) => (
                <RibbonItem key={r.label.join()} $w={44}>
                  <RibbonIcon>{r.icon}</RibbonIcon>
                  <RibbonLabel>
                    {r.label[0]}
                    <br />
                    {r.label[1]}
                  </RibbonLabel>
                </RibbonItem>
              ))}
            </RibbonItems>
            <GroupTitle>Folders</GroupTitle>
          </RibbonGroup>
          <RibbonDivider />
          <RibbonGroup $w={184} $pad={5}>
            <RibbonItems>
              {taskRibbon.map((r) => (
                <RibbonItem key={r.label.join()} $w={44}>
                  <RibbonIcon>{r.icon}</RibbonIcon>
                  <RibbonLabel>
                    {r.label[0]}
                    <br />
                    {r.label[1]}
                  </RibbonLabel>
                </RibbonItem>
              ))}
            </RibbonItems>
            <GroupTitle>Tasks</GroupTitle>
          </RibbonGroup>

          <RibbonGroup $w={50} $auto>
            <RibbonItems>
              <RibbonItem $w={40}>
                <RibbonIcon>
                  <PopOutI />
                </RibbonIcon>
              </RibbonItem>
            </RibbonItems>
          </RibbonGroup>
          <RibbonDivider />
          <RibbonGroup $w={244} $pad={5}>
            <RibbonItems>
              {adminRibbon.map((r) => (
                <RibbonItem key={r.label.join()} $w={r.w}>
                  <RibbonIcon>{r.icon}</RibbonIcon>
                  <RibbonLabel>
                    {r.label[0]}
                    {r.label[1] && <br />}
                    {r.label[1]}
                  </RibbonLabel>
                </RibbonItem>
              ))}
            </RibbonItems>
            <GroupTitle>Administration</GroupTitle>
          </RibbonGroup>
          <RibbonDivider />
          <RibbonGroup $w={60}>
            <RibbonItems>
              <RibbonItem $w={56}>
                <RibbonIcon>
                  <HelpI />
                </RibbonIcon>
                <RibbonLabel>Help</RibbonLabel>
              </RibbonItem>
            </RibbonItems>
          </RibbonGroup>
        </Ribbon>

        <BackBody>
          <Sidebar>
            <SidebarHead>
              Shortcuts
              <BackCircle>‹</BackCircle>
            </SidebarHead>
            <Gears c="#555" />
            <ShortcutLabel>
              New
              <br />
              Task
            </ShortcutLabel>
          </Sidebar>
          <BackMain>
            <InfoBar>
              <InfoDot />
              Information bar
            </InfoBar>
            <Split>
              <TreePane>
                <Guide $x={13} $y={16} $h={18} />
                <Guide $x={31} $y={41} $h={215} />
                <Guide $x={55} $y={58} $h={12} />
                <Guide $x={79} $y={77} $h={11} />
                <TreeList>{renderTree(backTree as TreeItem[])}</TreeList>
                <TreeScroll />
              </TreePane>
              <Tables>
                <TablePanel $h={144}>
                  <TableHead $cols={tableCols} $h={21}>
                    <HeadCell $pad={15}>
                      Name
                      <FilterMark>T</FilterMark>
                    </HeadCell>
                    <HeadCell $pad={10} $sep>
                      Owner
                      <FilterMark>T</FilterMark>
                    </HeadCell>
                  </TableHead>
                  <TableRows $pad={8}>
                    {taskRows.map((r) => (
                      <TableRow key={r.name} $cols={tableCols} $h={20.2}>
                        <CellName>
                          <CellIcon>{r.icon}</CellIcon>
                          {r.name}
                        </CellName>
                        <CellText $pad={11}>Administrator</CellText>
                      </TableRow>
                    ))}
                  </TableRows>
                </TablePanel>
                <TablePanel $h={153} $gap={7}>
                  <ActionsBar>
                    <PowerI />
                    Actions
                  </ActionsBar>
                  <TableHead $cols={actionCols} $h={24}>
                    <HeadCell $pad={15}>Name</HeadCell>
                    <HeadCell $pad={10}>Started</HeadCell>
                    <HeadCell $pad={11} $sep>
                      Finished
                    </HeadCell>
                  </TableHead>
                  <TableRows $pad={6}>
                    {actionRows.map((r) => (
                      <TableRow key={r.name} $cols={actionCols} $h={22}>
                        <CellName>
                          <CellIcon>{r.icon}</CellIcon>
                          {r.name}
                        </CellName>
                        <CellText>06-Jan-18, 11:34:24 AM</CellText>
                        <CellText $pad={13}>06-Jan-18, 11:34:24 AM</CellText>
                      </TableRow>
                    ))}
                  </TableRows>
                </TablePanel>
                <TablePanel $gap={8}>
                  <TableHead $cols={stepCols} $h={23}>
                    <HeadCell $pad={15}>Step</HeadCell>
                    <HeadCell $pad={0}>Started</HeadCell>
                    <HeadCell $pad={11} $sep>
                      Finished
                    </HeadCell>
                  </TableHead>
                </TablePanel>
              </Tables>
            </Split>
          </BackMain>
        </BackBody>
      </BackWindow>

      <MidWindow>
        <MidTitle>
          <WinButton $w={43} $red>
            <CloseX s={10} c="#fff" />
          </WinButton>
        </MidTitle>
        <MidMenu>
          More
          <MidChevron />
        </MidMenu>
        <MidPlain />
        <MidTime>13:30</MidTime>
        <Gantt>
          {Array.from({ length: 12 }).map((_, i) => (
            <DotCell key={i} />
          ))}
          {ganttRows.map((row, r) =>
            [...Array(9).fill(row[0]), ...row].map((green: boolean, c: number) => (
              <GanttCell key={`${r}-${c}`} $green={green}>
                {c === 11 && <Wrench c={green ? "#eee" : "#333"} />}
              </GanttCell>
            ))
          )}
        </Gantt>
      </MidWindow>

      <Shade $side="left" />
      <Shade $side="right" />

      <MainWindow>
        <MainTitle>
          <MainTop>
            <AppTitle>
              BPA Platform
              <TitleSep>|</TitleSep>
              Business Process Production Deployment
            </AppTitle>
            <WinButton $w={42}>?</WinButton>
            <WinButton $w={42}>
              <MinBar />
            </WinButton>
            <WinButton $w={42}>
              <RestoreIcon />
            </WinButton>
            <WinButton $w={42} $red>
              <CloseX s={11} c="#fff" />
            </WinButton>
          </MainTop>
          <MainTabs>
            <MainTab $w={63} $after={4}>
              General
            </MainTab>
            <MainTab $w={62} $active>
              Design
            </MainTab>
            <MainTab $w={71}>Script</MainTab>
          </MainTabs>
        </MainTitle>

        <Toolbar>
          <Tool $w={44}>
            <ToolIcon>
              <Save />
            </ToolIcon>
            <ToolLabel>Save</ToolLabel>
          </Tool>
          <Tool $w={43}>
            <ToolIcon>
              <CancelIcon />
            </ToolIcon>
            <ToolLabel>Cancel</ToolLabel>
          </Tool>
          <Tool $w={40}>
            <ToolIcon>
              <ApplyIcon />
            </ToolIcon>
            <ToolLabel>Apply</ToolLabel>
          </Tool>
          <ToolSep $left={27} />
          <Tool $w={50} $left={13}>
            <ToolIcon>
              <TaskFlow />
            </ToolIcon>
            <ToolLabel>Task View</ToolLabel>
          </Tool>
          <Tool $w={51}>
            <ToolIcon>
              <Toggle $w={50} />
            </ToolIcon>
          </Tool>
          <Tool $w={44}>
            <ToolIconPair $gap={0} $shift={2}>
              <BlueGears />
            </ToolIconPair>
            <ToolLabel>Step View</ToolLabel>
          </Tool>
          <ToolSep $left={18} />
          <ZoomBox>
            <MinBar $dark />
            <ZoomTrack>
              <ZoomKnob />
            </ZoomTrack>
            <svg width="10" height="10" viewBox="0 0 10 10">
              <path d="M5 0v10M0 5h10" stroke="#555" />
            </svg>
            <ZoomValue>75 %</ZoomValue>
            <Caret />
          </ZoomBox>
          <Tool $w={40} $left={10}>
            <ToolIcon>
              <FitIcon />
            </ToolIcon>
            <ToolLabel>Fit</ToolLabel>
          </Tool>
          <ToolSep $left={9} />
          <Tool $w={83}>
            <ToolIconPair $gap={24} $shift={6}>
              <AlignV />
              <AlignH />
            </ToolIconPair>
            <ToolLabel>Align</ToolLabel>
          </Tool>
          <ToolSep $left={0} />
          <Tool $w={85}>
            <ToolIconPair $gap={18} $shift={3}>
              <DistV />
              <DistH />
            </ToolIconPair>
            <ToolLabel>Distribute</ToolLabel>
          </Tool>
          <ToolSep $left={0} />
          <Tool $w={140}>
            <SwitchIcons>
              <NoEntry />
              <Toggle $w={50} $on />
              <SmallCheck />
            </SwitchIcons>
            <ToolLabel>
              <SwitchLabels>
                <span>Disable Task</span>
                <span>Enable Task</span>
              </SwitchLabels>
            </ToolLabel>
          </Tool>
        </Toolbar>

        <Panels>
          <Panel>
            <PanelHead $pad={16} $right={16} $gap={12}>
              <TaskFlow />
              Task
              <HeadSpacer />
              <CloseX />
            </PanelHead>
            <CanvasBox>
              <Canvas>
                <StartDot>START</StartDot>
                <Node $x={84} $w={61}>
                  <ScheduleNode />
                  Daily Schedule
                </Node>
                <Node $x={185} $w={60}>
                  <DataNode />
                  Get the data
                </Node>
                <SelectedNode $x={290} $w={62}>
                  <DocPen />
                  Format the text
                </SelectedNode>
                <Links width="622" height="470">
                  <path d="M144 226.500h42M247 226.500h43" stroke="#555" />
                  <circle cx="186" cy="226.500" r="1.800" fill="#444" />
                  <circle cx="290" cy="226.500" r="1.800" fill="#444" />
                </Links>
                <Badge $x={354} $y={193}>
                  <InfoDot s={10} />
                </Badge>
                <Badge $x={272} $y={263}>
                  <CloseX s={6} c="#a32222" sw={2} />
                </Badge>
                <Badge $x={354} $y={262}>
                  <CopyBadge />
                </Badge>
              </Canvas>
              <VScroll>
                ▲
                <VTrack>
                  <VThumb />
                </VTrack>
                ▼
              </VScroll>
              <HScroll>
                ◀
                <HTrack>
                  <HThumb />
                </HTrack>
                ▶
              </HScroll>
            </CanvasBox>
          </Panel>

          <Panel>
            <PanelHead $pad={17} $right={11}>
              <BlueGears />
              Step
              <HeadSpacer />
              <Undock />
              <HeadClose>
                <CloseX />
              </HeadClose>
            </PanelHead>
            <StepBar>
              <StepTool $w={24}>
                <StepToolIcon>
                  <Save />
                </StepToolIcon>
                Save
              </StepTool>
              <StepTool $w={62}>
                <StepToolIcon>
                  <CancelIcon />
                </StepToolIcon>
                Cancel
              </StepTool>
              <StepTool $w={50} $auto>
                <StepToolIcon>
                  <Globe />
                </StepToolIcon>
                Global
                <br />
                Configuration
              </StepTool>
            </StepBar>
            <StepForm>
              <FormHead>
                <DocPen w={23} h={21} />
                Format as Text
              </FormHead>
              <FormBody>
                <FieldLabel>Step Name</FieldLabel>
                <FieldBox $h={20}>
                  <TextLines $top={3}>Format the Text</TextLines>
                </FieldBox>
                <FieldLabel $top={14}>Description</FieldLabel>
                <FieldBox $h={94}>
                  <TextLines $top={7}>
                    Formats the text coming from recordset
                    <br />
                    before sending to Output - Email SMTP
                    <br />
                    Step.
                  </TextLines>
                  <ResizeGrip />
                </FieldBox>
                <ConfigureBtn>
                  Configure
                  <ConfigureDot />
                </ConfigureBtn>
              </FormBody>
            </StepForm>
          </Panel>

          <Splitter>
            <SplitDot />
            <SplitDot />
            <SplitDot />
          </Splitter>

          <Panel>
            <PanelHead $pad={17} $right={15}>
              <BrowserI />
              Browser
              <HeadSpacer />
              <Undock />
            </PanelHead>
            <BrowserTabs>
              <BrowserTab $active>Tools</BrowserTab>
              <BrowserTab>Environment</BrowserTab>
              <BrowserTab>Reference</BrowserTab>
              <BrowserTab>Help</BrowserTab>
            </BrowserTabs>
            <SearchArea>
              <SearchRow>
                <Field $w={213} $h={19}>
                  <FieldName>Scope</FieldName>
                  <FieldValue>All</FieldValue>
                  <FieldEnd />
                </Field>
              </SearchRow>
              <SearchRow $top={8}>
                <Field $w={171} $h={20}>
                  <FieldName>Search</FieldName>
                  <FieldValue />
                </Field>
                <SearchIcons>
                  <Magnify />
                  <ClearI />
                </SearchIcons>
              </SearchRow>
            </SearchArea>
            <BrowserTreeWrap>
              <Guide $x={22} $y={25} $h={256} />
              <Guide $x={41} $y={47} $h={85} />
              <TreeList>{renderTree(toolTree as unknown as TreeItem[])}</TreeList>
              <TreeScrollbar>
                <TreeThumb />
              </TreeScrollbar>
              <PointerSpot>
                <Cursor />
              </PointerSpot>
            </BrowserTreeWrap>
            <DragBand>
              <SplitDot />
              <SplitDot />
              <SplitDot />
            </DragBand>
            <StatusBar>
              <InfoDot />
              Microsoft SQL Server Trigger
            </StatusBar>
          </Panel>
        </Panels>
      </MainWindow>
    </Desktop>
  );
}

export default App;
